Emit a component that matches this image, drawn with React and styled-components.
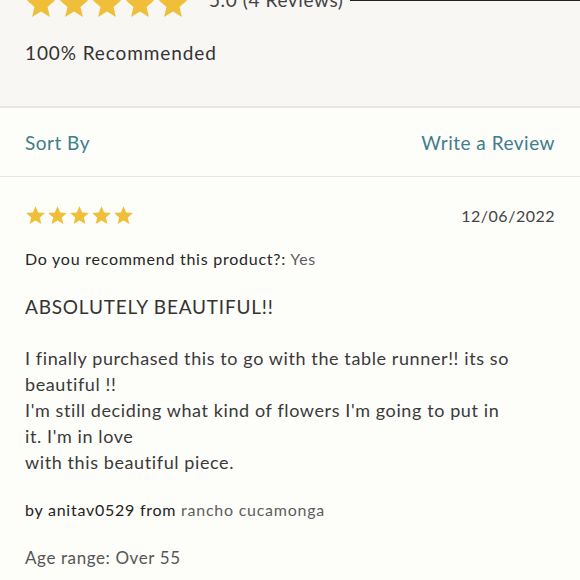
import React from "react"
import styled, { createGlobalStyle } from "styled-components"

const GlobalStyle = createGlobalStyle`
  html, body {
    margin: 0;
    padding: 0;
    background: #fdfdfa;
    overflow: hidden;
  }
  body {
    font-family: Lato, "Noto Sans", sans-serif;
    color: #333;
  }
`

const colors = {
  teal: "#3f7d8c",
  star: "#efbf3a",
  text: "#333333",
  muted: "#555555",
  line: "#e6e6e2",
}

const Page = styled.div`
  width: 580px;
  height: 580px;
  overflow: hidden;
  position: relative;
  background: #fdfdfa;
`

const TopEdge = styled.div`
  position: absolute;
  top: 0;
  left: 350px;
  right: 0;
  height: 1px;
  background: #222;
`

const Summary = styled.div`
  background: #f8f7f4;
  border-bottom: 2px solid ${colors.line};
  height: 108px;
  padding: 0 25px;
  box-sizing: border-box;
  overflow: hidden;
`

const SummaryRow = styled.div`
  display: flex;
  align-items: center;
  gap: 20px;
  margin-top: -14px;
  height: 36px;
`

const Stars = styled.div`
  display: flex;
  gap: ${(p) => p.gap}px;
`

const RatingText = styled.span`
  font-size: 19px;
  color: #444;
  letter-spacing: 0.6px;
  position: relative;
  top: -5px;
`

const Recommended = styled.div`
  margin-top: 19px;
  font-size: 19px;
  letter-spacing: 0.9px;
  color: ${colors.text};
`

const Toolbar = styled.div`
  display: flex;
  justify-content: space-between;
  align-items: center;
  height: 68px;
  padding: 0 25px;
  border-bottom: 1px solid ${colors.line};
`

const LinkText = styled.span`
  color: ${colors.teal};
  font-size: 19px;
  letter-spacing: 0.5px;
`

const Review = styled.div`
  padding: 26px 25px 0;
  display: flex;
  flex-direction: column;
`

const ReviewHead = styled.div`
  display: flex;
  justify-content: space-between;
  align-items: center;
  height: 24px;
`

const DateText = styled.span`
  font-size: 16px;
  color: #444;
  letter-spacing: 0.5px;
`

const Question = styled.div`
  margin-top: 22px;
  font-size: 16px;
  letter-spacing: 0.75px;
  color: #262626;
`

const Light = styled.span`
  color: #5e5e5e;
`

const Title = styled.div`
  margin-top: 27px;
  font-size: 19px;
  letter-spacing: 0.8px;
  color: ${colors.text};
`

const Body = styled.p`
  margin: 27px 0 0;
  max-width: 491px;
  font-size: 18px;
  line-height: 26px;
  letter-spacing: 0.6px;
  color: #3a3a3a;
`

const Author = styled.div`
  margin-top: 25px;
  font-size: 16px;
  letter-spacing: 0.75px;
  color: #222;
`

const Age = styled.div`
  margin-top: 28px;
  font-size: 17px;
  letter-spacing: 0.6px;
  color: ${colors.muted};
`

const Star = ({ size }) => (
  <svg width={size} height={size} viewBox="0 0 24 24">
    <path
      d="M12 1.5l3.1 7.1 7.6.6-5.8 5 1.8 7.5L12 17.7l-6.7 4 1.8-7.5-5.8-5 7.6-.6z"
      fill={colors.star}
    />
  </svg>
)

const StarRow = ({ size, gap }) => (
  <Stars gap={gap}>
    {[0, 1, 2, 3, 4].map((i) => (
      <Star key={i} size={size} />
    ))}
  </Stars>
)

export default function App() {
  return (
    <Page>
      <GlobalStyle />
      <Summary>
        <SummaryRow>
          <StarRow size={32} gap={1} />
          <RatingText>5.0 (4 Reviews)</RatingText>
        </SummaryRow>
        <Recommended>100% Recommended</Recommended>
      </Summary>
      <TopEdge />
      <Toolbar>
        <LinkText>Sort By</LinkText>
        <LinkText>Write a Review</LinkText>
      </Toolbar>
      <Review>
        <ReviewHead>
          <StarRow size={21} gap={1} />
          <DateText>12/06/2022</DateText>
        </ReviewHead>
        <Question>
          Do you recommend this product?: <Light>Yes</Light>
        </Question>
        <Title>ABSOLUTELY BEAUTIFUL!!</Title>
        <Body>
          I finally purchased this to go with the table runner!! its so beautiful !!
          <br />
          I'm still deciding what kind of flowers I'm going to put in it. I'm in love
          <br />
          with this beautiful piece.
        </Body>
        <Author>
          by anitav0529 from <Light>rancho cucamonga</Light>
        </Author>
        <Age>Age range: Over 55</Age>
      </Review>
    </Page>
  )
}
